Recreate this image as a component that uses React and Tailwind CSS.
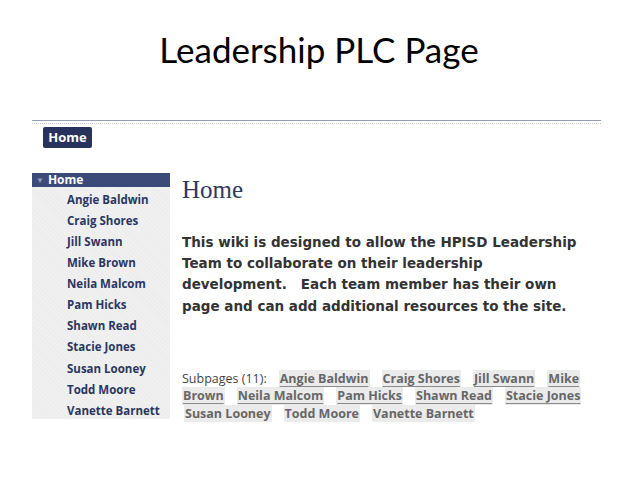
import React from 'react';

const members = [
    'Angie Baldwin',
    'Craig Shores',
    'Jill Swann',
    'Mike Brown',
    'Neila Malcom',
    'Pam Hicks',
    'Shawn Read',
    'Stacie Jones',
    'Susan Looney',
    'Todd Moore',
    'Vanette Barnett',
];

// subpage links, split the way the screenshot wraps them
const subLines = [
    ['Angie Baldwin', 'Craig Shores', 'Jill Swann', 'Mike'],
    ['Brown', 'Neila Malcom', 'Pam Hicks', 'Shawn Read', 'Stacie Jones'],
    ['Susan Looney', 'Todd Moore', 'Vanette Barnett'],
];

const SubLink = ({ label, plain }) => (
    <span
        className={
            'px-[1px] font-bold text-[#676767] bg-[#ebebeb] ' +
            (plain ? '' : 'underline underline-offset-[3px] decoration-[#8a8a8a]')
        }
    >
        {label}
    </span>
);

const App = () => {
    return (
        <div className="w-[638px] h-[479px] bg-white overflow-hidden font-['Open_Sans',sans-serif]">
            {/* slide title */}
            <div className="h-[120px] pt-[26px] text-center">
                <h1 className="font-['Lato',sans-serif] text-[35px] leading-[46px] text-black">
                    Leadership PLC Page
                </h1>
            </div>

            {/* wiki screenshot */}
            <div className="ml-[32px] w-[569px] h-[306px]">
                <div className="border-t border-[#98a2b6]" />
                <div className="h-[3px] border-b border-dotted border-[#c6cad3]" />

                <div className="pl-[11px] pt-[3px]">
                    <div className="w-[49px] h-[21px] bg-[#27335c] rounded-[2px] flex items-center justify-center text-white font-bold text-[13px] leading-none">
                        Home
                    </div>
                </div>

                <div className="flex mt-[25px]">
                    <aside className="w-[138px] h-[246px] shrink-0 bg-[#efefef] bg-[repeating-linear-gradient(45deg,#f0f0f0_0px,#f0f0f0_2px,#ececec_2px,#ececec_3px)]">
                        <div className="h-[14px] bg-[#3b4a78] flex items-center pl-[4px] gap-[4px]">
                            <span className="text-[#8d9cc4] text-[8px] leading-none">▼</span>
                            <span className="text-white font-bold text-[12px] leading-none">Home</span>
                        </div>
                        <ul className="pt-[2px]">
                            {members.map(name => (
                                <li
                                    key={name}
                                    className="h-[21.1px] pl-[35px] flex items-center text-[11.5px] font-bold text-[#2b3660] leading-none"
                                >
                                    {name}
                                </li>
                            ))}
                        </ul>
                    </aside>

                    <main className="pl-[12px]">
                        <h2 className="font-['Liberation_Serif',serif] text-[25px] leading-none text-[#2d3a5e] pt-[4px]">
                            Home
                        </h2>
                        <p className="mt-[30px] font-['DejaVu_Sans',sans-serif] text-[13.5px] leading-[21.2px] font-bold text-[#333] whitespace-pre">
                            {'This wiki is designed to allow the HPISD Leadership\n'}
                            {'Team to collaborate on their leadership\n'}
                            {'development.   Each team member has their own\n'}
                            {'page and can add additional resources to the site.'}
                        </p>
                        <div className="mt-[53px] text-[12.5px] leading-[17.5px] text-[#444]">
                            <div className="flex gap-[12px]">
                                <span>Subpages (11):</span>
                                {subLines[0].map(l => <SubLink key={l} label={l} />)}
                            </div>
                            <div className="flex gap-[12px]">
                                {subLines[1].map(l => <SubLink key={l} label={l} />)}
                            </div>
                            <div className="flex gap-[12px] pl-[2px]">
                                {subLines[2].map(l => <SubLink key={l} label={l} plain />)}
                            </div>
                        </div>
                    </main>
                </div>
            </div>
        </div>
    );
};

export default App;
